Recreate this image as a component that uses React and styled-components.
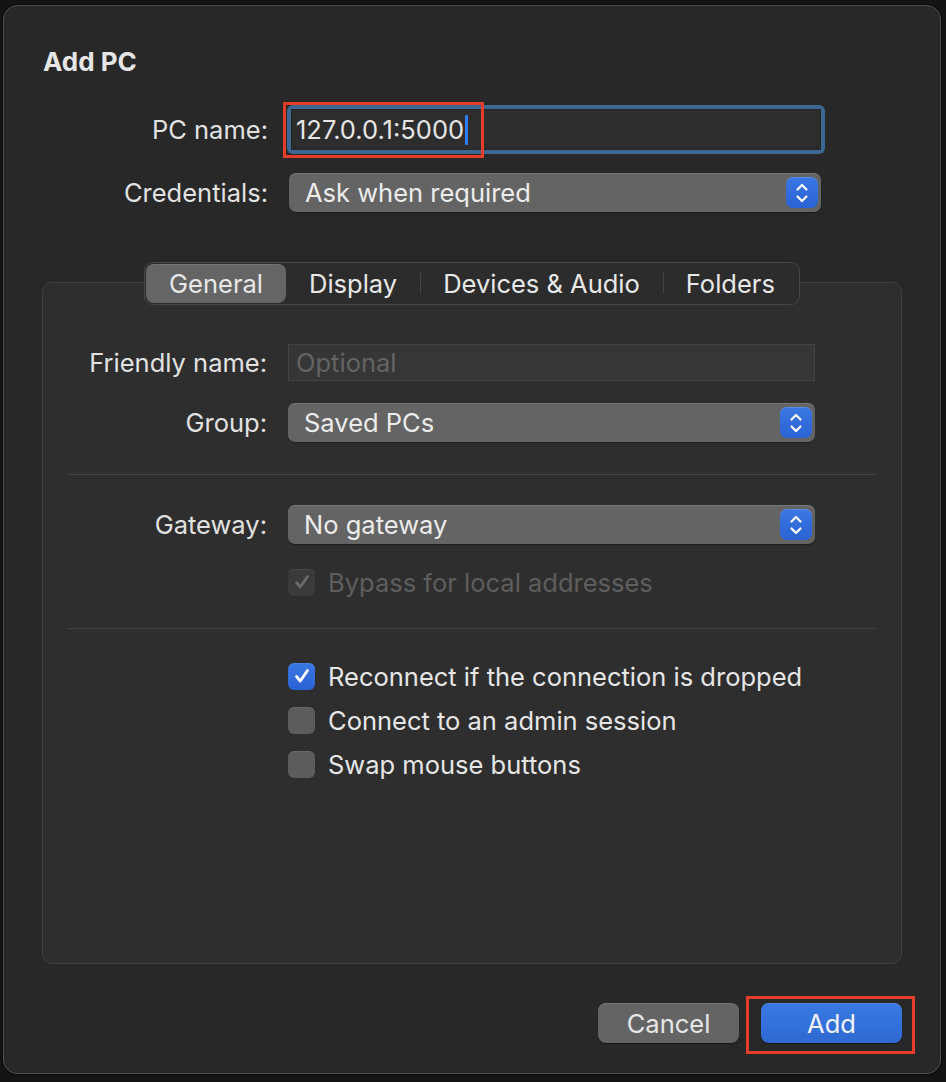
import React from 'react'
import styled, { createGlobalStyle } from 'styled-components'

const GlobalStyle = createGlobalStyle`
    html, body {
        margin: 0;
        padding: 0;
        background: #141414;
    }
    body {
        font-family: Inter, "Noto Sans", "Liberation Sans", sans-serif;
        -webkit-font-smoothing: antialiased;
    }
`

const Page = styled.div`
    width: 946px;
    height: 1082px;
    padding: 5px 5px 0 3px;
    box-sizing: border-box;
`

const Window = styled.div`
    width: 938px;
    height: 1069px;
    box-sizing: border-box;
    background: #282828;
    border: 1px solid #4e4e4e;
    border-radius: 14px;
    box-shadow: 0 0 0 1px #0c0c0c;
    padding: 0 38px 0 38px;
    display: flex;
    flex-direction: column;
    color: #e4e4e4;
    font-size: 25.5px;
`

const Title = styled.h1`
    margin: 42px 0 0 1px;
    font-size: 26px;
    line-height: 28px;
    font-weight: 700;
    color: #e6e6e6;
`

const Row = styled.div`
    display: grid;
    grid-template-columns: ${({label}) => label}px 1fr;
    column-gap: 21px;
    align-items: center;
    margin-top: ${({top}) => top || 0}px;
    padding-right: ${({inset}) => inset || 0}px;
`

const Label = styled.label`
    text-align: right;
    color: #e2e2e2;
    white-space: nowrap;
`

const Focus = styled.div`
    position: relative;
    padding: 4px;
    border-radius: 6px;
    background: #3d6893;
    margin-left: -2px;
`

const TextBox = styled.div`
    height: ${({focused}) => focused ? 41 : 37}px;
    box-sizing: border-box;
    display: flex;
    align-items: center;
    padding-left: ${({focused}) => focused ? 4 : 7}px;
    background: ${({focused}) => focused ? '#2d2d2d' : '#363636'};
    border: 1px solid ${({focused}) => focused ? '#262626' : '#444'};
    color: ${({placeholder}) => placeholder ? '#646464' : '#e6e6e6'};
`

const Caret = styled.span`
    display: inline-block;
    width: 3px;
    height: 30px;
    margin-left: 1px;
    border-radius: 1px;
    background: #2f7cf6;
`

const Highlight = styled.div`
    position: absolute;
    box-sizing: border-box;
    border: 3px solid #e43e2b;
    pointer-events: none;
    top: ${({t}) => t}px;
    left: ${({l}) => l}px;
    ${({w}) => w ? `width: ${w}px;` : ''}
    ${({h}) => h ? `height: ${h}px;` : ''}
    ${({r}) => r !== undefined ? `right: ${r}px;` : ''}
    ${({b}) => b !== undefined ? `bottom: ${b}px;` : ''}
`

const Popup = styled.div`
    height: 39px;
    box-sizing: border-box;
    border-radius: 7px;
    background: #646464;
    box-shadow: inset 0 1px 0 rgba(255,255,255,0.12), 0 1px 1px rgba(0,0,0,0.35);
    display: flex;
    align-items: center;
    justify-content: space-between;
    padding: 0 3px 0 16px;
    color: #ececec;
`

const Stepper = styled.div`
    width: 32px;
    height: 31px;
    border-radius: 7px;
    background: linear-gradient(#3a78e4, #2b62d3);
    box-shadow: inset 0 1px 0 rgba(255,255,255,0.15);
    display: flex;
    align-items: center;
    justify-content: center;
`

const TabWrap = styled.div`
    display: flex;
    justify-content: center;
    margin-top: 50px;
    margin-bottom: -23px;
    position: relative;
    z-index: 1;
`

const Tabs = styled.div`
    display: flex;
    align-items: stretch;
    height: 43px;
    box-sizing: border-box;
    padding: 1px;
    border: 1px solid #474747;
    border-radius: 9px;
    background: #2c2c2c;
`

const Tab = styled.div`
    display: flex;
    align-items: center;
    padding: 0 23px;
    border-radius: 8px;
    color: #e8e8e8;
    background: ${({active}) => active ? '#656565' : 'transparent'};
    box-shadow: ${({active}) => active ? 'inset 0 1px 0 rgba(255,255,255,0.1)' : 'none'};
    position: relative;
    ${({divider}) => divider && `
        &::before {
            content: '';
            position: absolute;
            left: 0;
            top: 9px;
            bottom: 9px;
            width: 1px;
            background: #444;
        }
    `}
`

const Panel = styled.div`
    height: 682px;
    box-sizing: border-box;
    background: #2e2e2e;
    border: 1px solid #3f3f3f;
    border-radius: 10px;
    padding: 61px 86px 0 0;
    display: flex;
    flex-direction: column;
`

const Separator = styled.div`
    height: 1px;
    background: #454545;
    margin: ${({top}) => top}px -60px 0 25px;
`

const CheckRow = styled.div`
    display: flex;
    align-items: center;
    gap: 13px;
    height: 28px;
    margin-top: ${({top}) => top || 0}px;
    margin-left: 245px;
    color: ${({disabled}) => disabled ? '#5e5e5e' : '#e6e6e6'};
`

const Box = styled.div`
    width: 27px;
    height: 27px;
    flex: 0 0 auto;
    box-sizing: border-box;
    border-radius: 6px;
    display: flex;
    align-items: center;
    justify-content: center;
    background: ${({checked, disabled}) => disabled ? '#3a3a3a' : checked ? 'linear-gradient(#3a78e4, #2b62d3)' : '#5c5c5c'};
    box-shadow: inset 0 1px 0 rgba(255,255,255,0.08);
`

const Footer = styled.div`
    display: flex;
    justify-content: flex-end;
    gap: 22px;
    margin-top: 39px;
`

const Button = styled.button`
    position: relative;
    width: 141px;
    height: 40px;
    border: none;
    border-radius: 8px;
    font: inherit;
    font-size: 25.5px;
    color: ${({primary}) => primary ? '#f2f4fa' : '#e6e6e6'};
    background: ${({primary}) => primary ? 'linear-gradient(#3a7ae3, #2f69d2)' : '#646464'};
    box-shadow: inset 0 1px 0 rgba(255,255,255,0.12), 0 1px 1px rgba(0,0,0,0.4);
    padding: 0;
`

const Chevrons = () => (
    <svg width="16" height="24" viewBox="0 0 16 24" fill="none" stroke="#fff" strokeWidth="2.2" strokeLinecap="round" strokeLinejoin="round">
        <path d="M3.5 8.5 L8 4 L12.5 8.5" />
        <path d="M3.5 15.5 L8 20 L12.5 15.5" />
    </svg>
)

const Tick = ({color}) => (
    <svg width="18" height="18" viewBox="0 0 18 18" fill="none" stroke={color} strokeWidth="2.8" strokeLinecap="round" strokeLinejoin="round">
        <path d="M3.5 9.5 L7.3 14 L14.5 3.5" />
    </svg>
)

const Select = ({children}) => (
    <Popup>
        <span>{children}</span>
        <Stepper><Chevrons /></Stepper>
    </Popup>
)

const Check = ({checked, disabled, children, top}) => (
    <CheckRow top={top} disabled={disabled}>
        <Box checked={checked} disabled={disabled}>
            {checked && <Tick color={disabled ? '#6a6a6a' : '#fff'} />}
        </Box>
        <span>{children}</span>
    </CheckRow>
)

export default function App() {
    return (
        <Page>
            <GlobalStyle />
            <Window>
                <Title>Add PC</Title>
                <Row label={226} inset={77} top={29}>
                    <Label>PC name:</Label>
                    <Focus>
                        <TextBox focused>127.0.0.1:5000<Caret /></TextBox>
                        <Highlight t={-3} l={-4} w={201} h={56} />
                    </Focus>
                </Row>
                <Row label={226} inset={81} top={19}>
                    <Label>Credentials:</Label>
                    <Select>Ask when required</Select>
                </Row>
                <TabWrap>
                    <Tabs>
                        <Tab active>General</Tab>
                        <Tab>Display</Tab>
                        <Tab divider>Devices &amp; Audio</Tab>
                        <Tab divider>Folders</Tab>
                    </Tabs>
                </TabWrap>
                <Panel>
                    <Row label={224}>
                        <Label>Friendly name:</Label>
                        <TextBox placeholder="1">Optional</TextBox>
                    </Row>
                    <Row label={224} top={22}>
                        <Label>Group:</Label>
                        <Select>Saved PCs</Select>
                    </Row>
                    <Separator top={32} />
                    <Row label={224} top={30}>
                        <Label>Gateway:</Label>
                        <Select>No gateway</Select>
                    </Row>
                    <Check checked disabled top={24}>Bypass for local addresses</Check>
                    <Separator top={32} />
                    <Check checked top={33}>Reconnect if the connection is dropped</Check>
                    <Check top={16}>Connect to an admin session</Check>
                    <Check top={16}>Swap mouse buttons</Check>
                </Panel>
                <Footer>
                    <Button>Cancel</Button>
                    <Button primary>
                        Add
                        <Highlight t={-7} l={-15} r={-13} b={-11} />
                    </Button>
                </Footer>
            </Window>
        </Page>
    )
}
